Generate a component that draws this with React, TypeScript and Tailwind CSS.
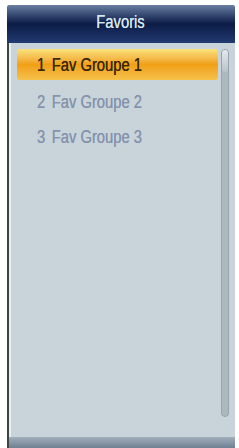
export default function App() {
  const rows = ["Fav Groupe 1", "Fav Groupe 2", "Fav Groupe 3"];
  return (
    <div className="w-[239px] h-[448px] bg-white pl-[7px] pr-[4px] pt-[5px] flex flex-col overflow-hidden" style={{ fontFamily: '"Liberation Sans", Arial, sans-serif' }}>
      {/* Header */}
      <div className="h-[38px] shrink-0 flex items-center justify-center pb-[3px] bg-gradient-to-b from-[#6b7fa3] via-[#0c1c46] to-[#233b72] rounded-t-[2px]">
        <span className="text-[18px] scale-x-[0.82] text-[#d6e6f2] [text-shadow:0_0_0.4px_#d6e6f2]">Favoris</span>
      </div>

      {/* Body */}
      <div className="flex-1 flex flex-col bg-[#c9d3da] border-l-2 border-[#3b4640] shadow-[inset_2px_0_0_#e8eef0]">
        <div className="flex-1 flex pt-[6px] pl-[8px] pr-[6px]">
          <div className="flex-1 flex flex-col">
            {rows.map((r, i) => (
              <div
                key={r}
                className={
                  i === 0
                    ? "h-[31px] flex items-center pl-[20px] rounded-[3px] bg-gradient-to-b from-[#f9e27c] via-[#f0a012] to-[#f6c14a] mb-[4px]"
                    : "h-[35px] flex items-center pl-[20px]"
                }
              >
                <span
                  className={
                    "text-[18px] scale-x-[0.82] origin-left whitespace-nowrap mt-[2px] flex gap-[8px] " +
                    (i === 0 ? "text-[#3a2808] [text-shadow:0_0_0.5px_#3a2808]" : "text-[#8593ad] [text-shadow:0_0_0.5px_#8593ad]")
                  }
                >
                  <span>{i + 1}</span>
                  <span>{r}</span>
                </span>
              </div>
            ))}
          </div>
          {/* Scrollbar */}
          <div className="w-[8px] ml-[3px] mb-[20px] rounded-full bg-[#aeb8bf] border border-[#97a2aa] flex flex-col">
            <div className="h-[22px] rounded-full bg-gradient-to-b from-[#e4eaee] to-[#b8c2c8]" />
          </div>
        </div>
        <div className="h-[11px] shrink-0 bg-gradient-to-b from-[#a2afbb] to-[#6f8092]" />
      </div>
    </div>
  );
}
